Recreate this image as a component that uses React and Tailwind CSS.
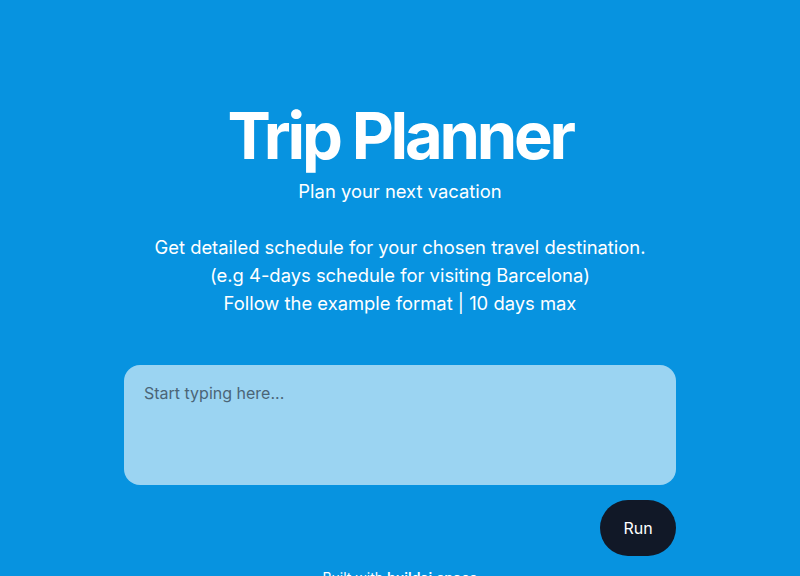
export default function App() {
  return (
    <div className="min-h-screen bg-[#0793e0] text-white flex flex-col items-center" style={{ fontFamily: 'Inter, "Noto Sans", sans-serif' }}>
      <div className="pt-[96px] flex flex-col items-center text-center">
        <h1 className="text-[65px] leading-[80px] font-bold tracking-[-0.05em]">Trip Planner</h1>
        <p className="text-[18.4px] leading-7 mt-[1px]">Plan your next vacation</p>
        <div className="mt-[28px] text-[18.4px] leading-7">
          <p>Get detailed schedule for your chosen travel destination.</p>
          <p>(e.g 4-days schedule for visiting Barcelona)</p>
          <p>Follow the example format | 10 days max</p>
        </div>
      </div>
      <div className="w-[552px] mt-[48px] flex flex-col">
        <textarea
          placeholder="Start typing here..."
          className="w-full h-[120px] resize-none rounded-2xl bg-[#9bd4f2] px-5 py-4 text-base text-gray-900 placeholder:text-[#4b6577] outline-none"
        />
        <div className="flex justify-end mt-[15px]">
          <button className="w-[76px] h-[56px] rounded-full bg-[#111827] text-white text-base">Run</button>
        </div>
      </div>
      <p className="mt-[12px] text-sm">
        Built with <span className="font-semibold">buildai.space</span>
      </p>
    </div>
  )
}
